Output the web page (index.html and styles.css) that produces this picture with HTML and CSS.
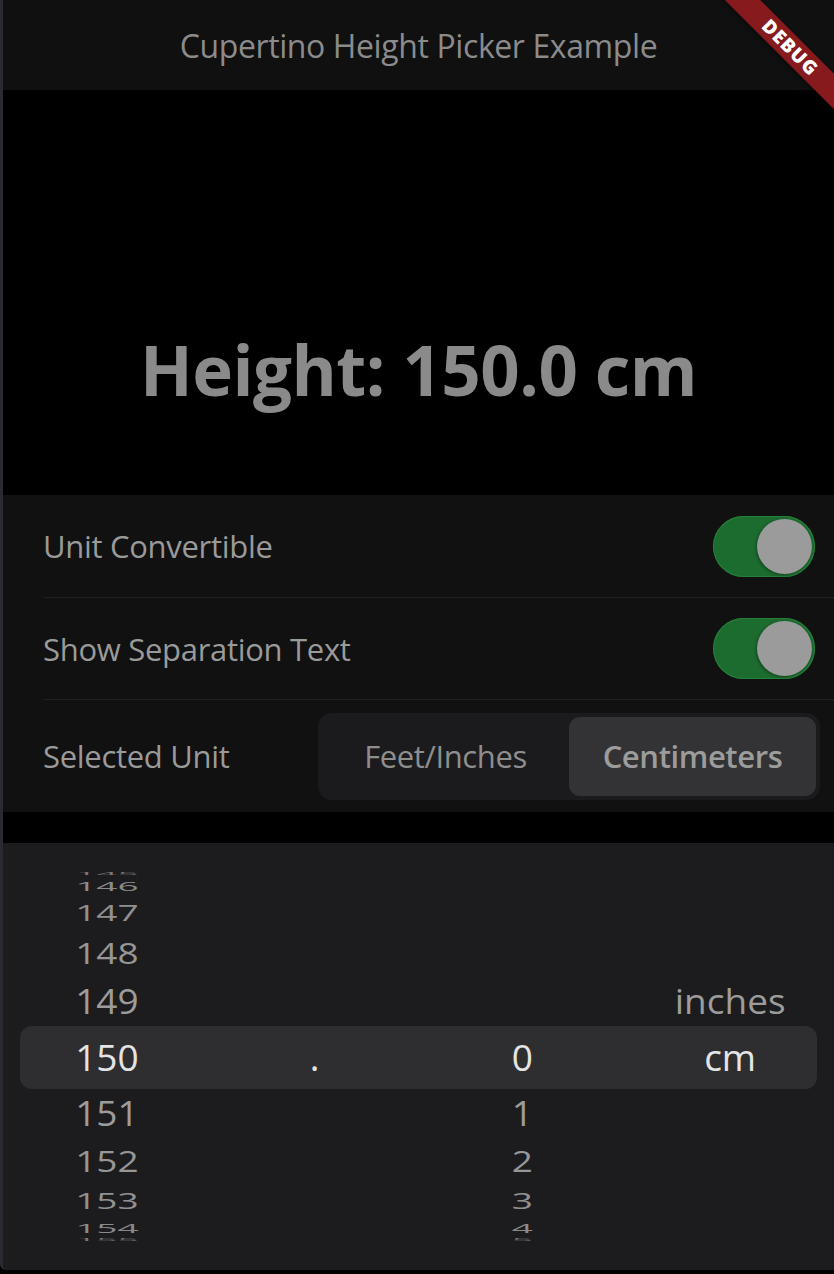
FILE: index.html
```html
<!DOCTYPE html>
<html lang="en">
<head>
<meta charset="utf-8">
<title>Cupertino Height Picker Example</title>
<link rel="stylesheet" href="styles.css">
</head>
<body>
<div class="window">
  <header class="appbar">
    <h1 class="title">Cupertino Height Picker Example</h1>
  </header>
  <div class="debug">DEBUG</div>

  <main class="display">
    <div class="height">Height: 150.0 cm</div>
  </main>

  <section class="settings">
    <div class="setting s1">
      <span class="label">Unit Convertible</span>
      <span class="toggle"><span class="thumb"></span></span>
    </div>
    <div class="setting s2">
      <span class="label">Show Separation Text</span>
      <span class="toggle"><span class="thumb"></span></span>
    </div>
    <div class="setting s3">
      <span class="label">Selected Unit</span>
      <div class="segmented">
        <span class="seg">Feet/Inches</span>
        <span class="seg active">Centimeters</span>
      </div>
    </div>
  </section>

  <section class="picker">
    <div class="wheel">
      <div class="row r5"><span>145</span><span></span><span></span><span></span></div>
      <div class="row r4"><span>146</span><span></span><span></span><span></span></div>
      <div class="row r3"><span>147</span><span></span><span></span><span></span></div>
      <div class="row r2"><span>148</span><span></span><span></span><span></span></div>
      <div class="row r1"><span>149</span><span></span><span></span><span>inches</span></div>
      <div class="sel">
        <div class="row r0"><span>150</span><span>.</span><span>0</span><span>cm</span></div>
      </div>
      <div class="row r1"><span>151</span><span></span><span>1</span><span></span></div>
      <div class="row r2"><span>152</span><span></span><span>2</span><span></span></div>
      <div class="row r3"><span>153</span><span></span><span>3</span><span></span></div>
      <div class="row r4"><span>154</span><span></span><span>4</span><span></span></div>
      <div class="row r5"><span>155</span><span></span><span>5</span><span></span></div>
    </div>
  </section>
</div>
</body>
</html>
```

FILE: styles.css
```css
html, body {
  margin: 0;
  padding: 0;
  background: #000;
}

body {
  width: 834px;
  height: 1274px;
  overflow: hidden;
  font-family: "Open Sans", "Noto Sans", sans-serif;
}

.window {
  position: relative;
  width: 834px;
  height: 1270px;
  box-sizing: border-box;
  border-left: 3px solid #2a2a31;
  overflow: hidden;
  border-bottom-left-radius: 6px;
  display: flex;
  flex-direction: column;
}

.appbar {
  height: 90px;
  flex: none;
  background: #101010;
  display: flex;
  align-items: center;
  justify-content: center;
}

.title {
  margin: 0;
  font-size: 32px;
  font-weight: 500;
  color: #8b8b8b;
  letter-spacing: -0.4px;
}

.debug {
  position: absolute;
  left: 677px;
  top: 35px;
  width: 220px;
  height: 25px;
  line-height: 25px;
  transform: rotate(45deg);
  background: #861a1c;
  color: #fff;
  text-align: center;
  font-weight: 800;
  font-size: 19px;
  letter-spacing: 1px;
  box-shadow: 0 2px 4px rgba(0,0,0,0.4);
}

.display {
  height: 405px;
  flex: none;
  background: #000;
  display: flex;
  justify-content: center;
  align-items: flex-start;
}

.height {
  margin-top: 237px;
  font-size: 69px;
  font-weight: 700;
  color: #8a8a8a;
  line-height: 84px;
  letter-spacing: -0.5px;
}

.settings {
  height: 317px;
  flex: none;
  background: #111111;
  display: flex;
  flex-direction: column;
}

.setting {
  margin-left: 40px;
  display: flex;
  align-items: center;
  justify-content: space-between;
  box-sizing: border-box;
}

.s1 { height: 103px; border-bottom: 1px solid #1f1f1f; padding-right: 19px; }
.s2 { height: 102px; border-bottom: 1px solid #1f1f1f; padding-right: 19px; }
.s3 { flex: 1; padding-right: 14px; }

.label {
  font-size: 31px;
  color: #9a9a9a;
  letter-spacing: -0.3px;
}

.toggle {
  width: 102px;
  height: 61px;
  border-radius: 31px;
  background: #1c6b2f;
  box-shadow: inset 0 0 0 1px #25803a;
  display: flex;
  align-items: center;
  justify-content: flex-end;
  padding-right: 3px;
  box-sizing: border-box;
}

.thumb {
  width: 55px;
  height: 55px;
  border-radius: 50%;
  background: #9b9b9b;
  box-shadow: -1px 1px 3px rgba(0,0,0,0.35);
}

.segmented {
  width: 502px;
  height: 87px;
  box-sizing: border-box;
  padding: 4px;
  border-radius: 14px;
  background: #1b1b1d;
  display: grid;
  grid-template-columns: 1fr 1fr;
}

.seg {
  display: flex;
  align-items: center;
  justify-content: center;
  font-size: 31px;
  color: #8e8e8e;
  letter-spacing: -0.4px;
  border-radius: 11px;
}

.seg.active {
  background: #333335;
  color: #9c9c9c;
  font-weight: 600;
}

.picker {
  flex: 1;
  margin-top: 31px;
  background: #1c1c1e;
  padding-top: 29px;
  box-sizing: border-box;
}

.wheel {
  display: flex;
  flex-direction: column;
}

.row {
  display: flex;
  align-items: center;
  overflow: hidden;
  font-size: 37px;
  color: #9c9c9c;
}

.row span {
  flex: 1 1 0;
  display: block;
  text-align: center;
  line-height: 40px;
  height: 40px;
}

.sel {
  margin: 0 17px;
  background: #2e2e31;
  border-radius: 12px;
}

.sel .row { margin: 0 -17px; }

.r0 { height: 63px; color: #e4e4e4; }
.r1 { height: 49.5px; }
.r2 { height: 46px; color: #969696; }
.r3 { height: 34px; color: #909090; }
.r4 { height: 20px; color: #8a8a8a; }
.r5 { height: 4px; color: #777; }

.r1 span { transform: scaleY(0.93); }
.r2 span { transform: scaleY(0.78); }
.r3 span { transform: scaleY(0.58); }
.r4 span { transform: scaleY(0.36); }
.r5 span { transform: scaleY(0.08); }
```
